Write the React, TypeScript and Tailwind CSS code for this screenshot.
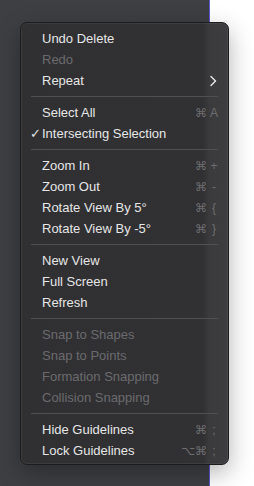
import { ReactNode } from "react"

type Item = {
    label: string
    disabled?: boolean
    checked?: boolean
    submenu?: boolean
    mods?: string
    keyChar?: string
}

const groups: Item[][] = [
    [
        { label: "Undo Delete" },
        { label: "Redo", disabled: true },
        { label: "Repeat", submenu: true },
    ],
    [
        { label: "Select All", mods: "⌘", keyChar: "A" },
        { label: "Intersecting Selection", checked: true },
    ],
    [
        { label: "Zoom In", mods: "⌘", keyChar: "+" },
        { label: "Zoom Out", mods: "⌘", keyChar: "-" },
        { label: "Rotate View By 5°", mods: "⌘", keyChar: "{" },
        { label: "Rotate View By -5°", mods: "⌘", keyChar: "}" },
    ],
    [
        { label: "New View" },
        { label: "Full Screen" },
        { label: "Refresh" },
    ],
    [
        { label: "Snap to Shapes", disabled: true },
        { label: "Snap to Points", disabled: true },
        { label: "Formation Snapping", disabled: true },
        { label: "Collision Snapping", disabled: true },
    ],
    [
        { label: "Hide Guidelines", mods: "⌘", keyChar: ";" },
        { label: "Lock Guidelines", mods: "⌥⌘", keyChar: ";" },
    ],
]

function Row({ item }: { item: Item }) {
    let right: ReactNode = null
    if (item.submenu) {
        right = (
            <svg width="8" height="12" viewBox="0 0 8 12" className="mr-[1px]">
                <path d="M2 1.5 L6.5 6 L2 10.5" fill="none" stroke="#e2e2e2" strokeWidth="1.5" strokeLinecap="round" strokeLinejoin="round" />
            </svg>
        )
    } else if (item.mods) {
        right = (
            <div className="flex items-center text-[12px] text-[#6e6e70] font-['DejaVu_Sans',sans-serif]">
                <span className="text-right">{item.mods}</span>
                <span className="w-[8px] ml-[3px] text-center font-['Liberation_Sans',sans-serif]">{item.keyChar}</span>
            </div>
        )
    }

    return (
        <div className="h-[21px] flex items-center pl-[9px] pr-[10px]">
            <span className="w-[12px] text-[13px] text-[#e2e2e2] leading-none">{item.checked ? "✓" : ""}</span>
            <span className={`flex-1 text-[13px] leading-none ${item.disabled ? "text-[#6b6b6d]" : "text-[#e6e6e6]"}`}>
                {item.label}
            </span>
            {right}
        </div>
    )
}

export default function App() {
    return (
        <div className="relative w-[254px] h-[486px] flex font-['Liberation_Sans',sans-serif] antialiased">
            {/* Left panel */}
            <div className="w-[210px] h-full bg-[#3e3f43] border-r border-[#5c5ad0]" />
            {/* Right area */}
            <div className="flex-1 h-full bg-white" />

            {/* Context menu */}
            <div className="absolute left-[20px] top-[22px] w-[209px] rounded-[7px] border border-[#1c1c1e] bg-[linear-gradient(90deg,#303033_0%,#313134_88%,#3b3b3d_91%,#3d3d3f_100%)] shadow-[0_0_0_1px_rgba(255,255,255,0.06)_inset,0_8px_24px_rgba(0,0,0,0.3)] pt-[5px] pb-[3px]">
                {groups.map((group, gi) => (
                    <div key={gi}>
                        {gi > 0 && (
                            <div className="h-[11px] flex items-center px-[10px]">
                                <div className="h-px w-full bg-[#505053]" />
                            </div>
                        )}
                        {group.map((item) => (
                            <Row key={item.label} item={item} />
                        ))}
                    </div>
                ))}
            </div>
        </div>
    )
}
